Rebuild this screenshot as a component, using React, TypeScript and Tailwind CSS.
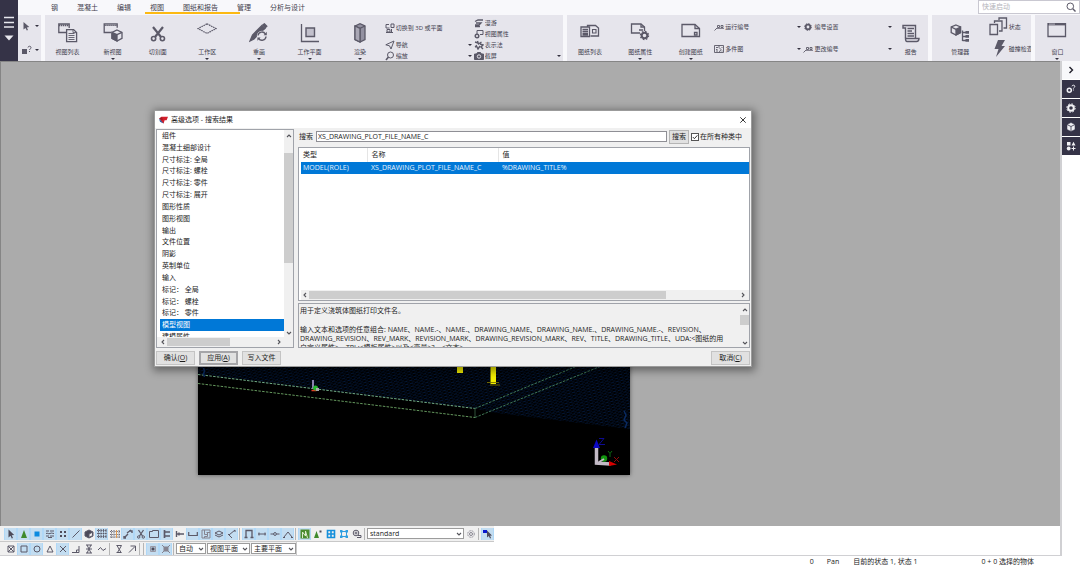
import React from "react";

type Kids = { children?: React.ReactNode };

const FONT = "font-['Open_Sans','Noto_Sans_CJK_SC',sans-serif]";

function Big({ children }: Kids) {
  return (
    <svg viewBox="0 0 20 20" className="h-5 w-5 shrink-0" fill="none" stroke="#5b5968" strokeWidth="1.3">
      {children}
    </svg>
  );
}

function Small({ children, color = "#5b5968" }: Kids & { color?: string }) {
  return (
    <svg viewBox="0 0 10 10" className="h-[10px] w-[10px] shrink-0" fill="none" stroke={color} strokeWidth="1">
      {children}
    </svg>
  );
}

function Caret() {
  return (
    <svg viewBox="0 0 4 2" className="h-[2px] w-1 shrink-0" fill="#33313f">
      <path d="M0 0h4L2 2z" />
    </svg>
  );
}

const D = "#5b5968";

const big = {
  list: (
    <Big>
      <path d="M8 9.5H.8V1h10.4v4" />
      <path d="M1 2.4h10" strokeWidth="1.6" strokeDasharray="1.4 .6" />
      <path d="M8.6 6.6h7l3 3v9h-10z" />
      <path d="M10.5 10.5h6M10.5 12.5h6M10.5 14.5h6M10.5 16.5h6M15 6.6v3h3.6" strokeWidth=".9" />
    </Big>
  ),
  newView: (
    <Big>
      <path d="M8 9.5H1.2V.8h13v4" />
      <path d="M1.4 2.2h12.6" strokeWidth="1.6" strokeDasharray="1.4 .6" />
      <path d="M14 7l5 2.3v6L14 18l-5-2.7v-6z" fill="#e6e5ec" />
      <path d="M9 9.3l5 2.4V18l-5-2.7z" fill={D} />
      <path d="M14 11.7l5-2.4" />
    </Big>
  ),
  cut: (
    <Big>
      <path d="M5 4l8 10M15 4L7 14" strokeWidth="2.2" />
      <circle cx="5.6" cy="15.6" r="2.1" strokeWidth="1.6" />
      <circle cx="14.4" cy="15.6" r="2.1" strokeWidth="1.6" />
    </Big>
  ),
  area: (
    <Big>
      <path d="M10 .8l9 4.8-9 4.8-9-4.8z" strokeDasharray="1.6 .7" strokeWidth="1.2" />
    </Big>
  ),
  redraw: (
    <Big>
      <path d="M1 18l2.500-6L13 2.500l3 3-5 4-6 6.500z" fill={D} />
      <path d="M14 1.800L15.400.8l2.400 2.400-1.400 1.400z" fill={D} />
      <circle cx="13" cy="13" r="5.200" fill="#e6e5ec" stroke="none" />
      <path d="M9 12.500a4 4 0 0 1 7.400-1.500M17 13.500a4 4 0 0 1-7.400 1.800" strokeWidth="1.400" />
      <path d="M17.800 8.800v3.400h-3.200zM8.400 17.800v-3.400h3.200z" fill={D} stroke="none" />
    </Big>
  ),
  plane: (
    <Big>
      <path d="M1.500 1v17.500H19" />
      <path d="M6 5h8.500v8.500H6z" fill="#c2c0cc" strokeWidth="1.400" />
    </Big>
  ),
  render: (
    <Big>
      <path d="M5 3l5-2.300L15 3v13.500l-5 2.500-5-2.500z" fill="#9391a1" />
      <path d="M5 3l5 2.300L15 3M10 5.300V19" />
      <path d="M5 3l5 2.300V19l-5-2.500z" fill="#a9a7b5" />
    </Big>
  ),
  drawings: (
    <Big>
      <path d="M7.500 4V2.500h8l3 2.500v8h-8" />
      <path d="M12.500 6.500h3.500v3.500h-3.500z" strokeWidth="1.100" />
      <path d="M1 4h8.500v9.500H1z" fill="#e6e5ec" />
      <path d="M2.500 6.500h5.500M2.500 8.500h5.500M2.500 10.500h5.500M2.500 12h5.500" />
    </Big>
  ),
  drawProps: (
    <Big>
      <path d="M10 10H1.500V1h9.500l3.500 3v4" />
      <path d="M11 1v3h3.500M9 7h4" />
      <circle cx="14.500" cy="12.500" r="2.800" strokeWidth="2" />
      <circle cx="14.500" cy="12.500" r="4.100" strokeDasharray="1.610 1.610" strokeWidth="1.200" />
    </Big>
  ),
  createDraw: (
    <Big>
      <path d="M1 1.500h13l4.500 4V13.500H1z" />
      <path d="M14 1.500v4h4.500M13.500 9.500h2.500V12h-2.500z" />
    </Big>
  ),
  report: (
    <Big>
      <path d="M4.500 15V5H2V2.500h12.500V15" strokeWidth="1.400" />
      <path d="M6.500 5.500H13M6.500 8h4.500M6.500 10.500H13M6.500 13H13" />
      <path d="M4.500 15.500h13.500c0 2-1 3-2.500 3H6c-1.500 0-1.500-1.500-1.500-3z" strokeWidth="1.400" />
    </Big>
  ),
  manager: (
    <Big>
      <path d="M6 2l4.500 2v5.500L6 12 1.200 9.500V4z" />
      <path d="M6 6.300l4.500-2.300v5.500L6 12z" fill={D} />
      <path d="M1.200 4L6 6.300" />
      <path d="M12.500 7.500v10.500M12.500 9.500H16M12.500 13.500H16M12.500 17.500H16" />
      <path d="M15.500 8h3.500v2.800h-3.500zM15.500 12h3.500v2.800h-3.500zM15.500 16h3.500v2.800h-3.500z" fill={D} stroke="none" />
    </Big>
  ),
  window: (
    <Big>
      <path d="M1 0h17.500V13.500H1z" />
      <path d="M1 1h17.500" strokeWidth="2.800" />
      <path d="M2.500 1.200h5" stroke="#e6e5ec" strokeDasharray="1 1" />
    </Big>
  ),
};

function BigItem({ icon, label, caret }: { icon: React.ReactNode; label: string; caret?: boolean }) {
  return (
    <button className="flex min-w-0 flex-col items-center pt-2">
      {icon}
      <span className="mt-1 whitespace-nowrap text-[6px] leading-[10px]">{label}</span>
      <span className="flex h-1 items-center">{caret && <Caret />}</span>
    </button>
  );
}

function SmallItem({ icon, label, caret }: { icon: React.ReactNode; label: string; caret?: boolean }) {
  return (
    <button className="flex h-[11px] min-w-0 items-center gap-px pr-[2px] text-left">
      {icon}
      <span className="flex-1 overflow-hidden whitespace-nowrap text-[6px] leading-[10px]">{label}</span>
      {caret && <Caret />}
    </button>
  );
}

const num = (
  <Small>
    <path d="M.5 8.500L3 6M3.500 3.500h2v2h-2zM7 3.500h2v2H7z" strokeWidth=".9" />
    <path d="M3 6.500h7" strokeWidth=".7" />
  </Small>
);

function Ribbon() {
  return (
    <div className="grid h-[46px] grid-cols-[517fr_360fr_99fr_45fr] gap-1 overflow-hidden">
      <div className="grid grid-cols-[45fr_45fr_45fr_54fr_49fr_52fr_49fr_89fr_89fr] bg-[#e6e5ec]">
        <BigItem icon={big.list} label="视图列表" />
        <BigItem icon={big.newView} label="新视图" caret />
        <BigItem icon={big.cut} label="切割面" />
        <BigItem icon={big.area} label="工作区" caret />
        <BigItem icon={big.redraw} label="重画" caret />
        <BigItem icon={big.plane} label="工作平面" caret />
        <BigItem icon={big.render} label="渲染" caret />
        <div className="flex flex-col justify-end">
          <SmallItem
            label="切换到 3D 或平面"
            icon={
              <Small>
                <path d="M1 1.500h3M1 1.500v3.500h3.500M6 1h3v3.500H6zM2 6.500h3V9H2zM6.500 6v3M1 9.500h7" />
              </Small>
            }
          />
          <div className="mt-[6px] flex flex-col">
            <SmallItem label="导航" caret icon={<Small><path d="M.8 4.800L9 1 6 9 4.500 5.800z" /></Small>} />
            <SmallItem
              label="缩放"
              caret
              icon={<Small><circle cx="5.500" cy="4" r="3" /><path d="M3.500 6L1 9" strokeWidth="1.600" /></Small>}
            />
          </div>
        </div>
        <div className="flex flex-col justify-end">
          <SmallItem
            label="漫游"
            icon={<Small><path d="M1 3.500l3-1.500h5M2 5h5L5 7H1M1 8.500h5" strokeWidth="1.300" /></Small>}
          />
          <SmallItem
            label="视图属性"
            icon={<Small><path d="M3 5V1.500h6V5.500H6" /><circle cx="3" cy="7" r="1.800" strokeWidth="1.400" /></Small>}
          />
          <SmallItem
            label="表示法"
            icon={<Small><path d="M1 2l3 1M3.500 1l1 3 3-2M6 4l3 1-2 2 2 2M2 5l2 4 2-3M1 7l2-1" strokeWidth="1.400" /></Small>}
          />
          <SmallItem
            label="截屏"
            caret
            icon={
              <Small>
                <path d="M.5 3h2l1-1.500h3L7.500 3h2v5.500h-9z" fill={D} />
                <circle cx="5" cy="5.500" r="1.700" stroke="#e6e5ec" />
              </Small>
            }
          />
        </div>
      </div>
      <div className="grid grid-cols-[46fr_54fr_47fr_89fr_90fr_34fr] bg-[#e6e5ec]">
        <BigItem icon={big.drawings} label="图纸列表" />
        <BigItem icon={big.drawProps} label="图纸属性" caret />
        <BigItem icon={big.createDraw} label="创建图纸" caret />
        <div className="flex flex-col gap-[11px] pt-[6px]">
          <SmallItem icon={num} label="运行编号" caret />
          <SmallItem
            label="多件图"
            caret
            icon={<Small><path d="M.5 1.500h9v7h-9zM5 1.500v2l2 2-2 3M2 3.500h2M2 5.500h1.500M2 7h2M7.500 3.500h1M7.500 7h1" strokeWidth=".9" /></Small>}
          />
        </div>
        <div className="flex flex-col gap-[11px] pt-[6px]">
          <SmallItem
            label="编号设置"
            caret
            icon={
              <Small>
                <circle cx="5" cy="5" r="2.300" strokeWidth="1.800" />
                <circle cx="5" cy="5" r="3.400" strokeDasharray="1.335 1.335" />
              </Small>
            }
          />
          <SmallItem icon={num} label="更改编号" caret />
        </div>
        <BigItem icon={big.report} label="报告" />
      </div>
      <div className="grid grid-cols-[57fr_42fr] overflow-hidden bg-[#e6e5ec]">
        <BigItem icon={big.manager} label="管理器" />
        <div className="flex min-w-0 flex-col gap-[2px] overflow-hidden pt-[2px]">
          <button className="flex items-center text-[6px] leading-[10px]">
            <Big>
              <path d="M1 7.500h7.500v10H1z" />
              <path d="M5.500 6V4H13v10h-3M10 3V1h7.500V11H14.500" />
            </Big>
            <span className="whitespace-nowrap">状态</span>
          </button>
          <button className="flex items-center text-[6px] leading-[10px]">
            <Big>
              <path d="M9 1h7l-3.500 6H16L7 18l2.500-8H5.500z" fill={D} stroke="none" />
            </Big>
            <span className="whitespace-nowrap">碰撞检查</span>
          </button>
        </div>
      </div>
      <div className="grid bg-[#e6e5ec]">
        <BigItem icon={big.window} label="窗口" caret />
      </div>
    </div>
  );
}

function Header() {
  return (
    <header className="flex h-[61px] shrink-0 bg-[#f8f8fb] text-[#3f3d4c]">
      <button aria-label="菜单" className="flex w-[18px] shrink-0 justify-center bg-[#353347]">
        <svg viewBox="0 0 18 61" className="h-[61px] w-[18px]">
          <path d="M4 17.500h10M4 22.500h10M4 27h10" stroke="#e8e8ee" strokeWidth="1.300" />
          <path d="M4.500 35.500h9L9 40.500z" fill="#e8e8ee" />
        </svg>
      </button>
      <div className="flex min-w-0 flex-1 flex-col">
        <div className="flex h-[15px] items-start justify-between">
          <nav className="flex h-[15px] items-center gap-[19px] pl-[33px] text-[7px] leading-[15px]">
            <a href="#steel">钢</a>
            <a href="#concrete">混凝土</a>
            <a href="#edit">编辑</a>
            <div className="relative flex gap-[19px]">
              <a href="#view">视图</a>
              <a href="#drawings">图纸和报告</a>
              <span className="absolute -left-[5px] -right-[22px] bottom-[1px] h-[2px] bg-[#fcb912]" />
            </div>
            <a href="#manage">管理</a>
            <a href="#analysis">分析与设计</a>
          </nav>
          <label className="flex h-[14px] w-[102px] items-center border border-[#c9c8d1] bg-white pl-[3px] pr-[3px]">
            <input
              aria-label="快速启动"
              placeholder="快速启动"
              className="w-full min-w-0 flex-1 text-[7px] leading-[10px] outline-none placeholder:text-[#b4b4bb]"
            />
            <Small><circle cx="4.300" cy="4.300" r="3.300" /><path d="M6.800 6.800l2.700 2.700" strokeWidth="1.400" /></Small>
          </label>
        </div>
        <div className="flex h-[46px] gap-1">
          <div className="flex w-[23px] shrink-0 flex-col justify-between bg-[#e6e5ec] py-[6px] pl-1 pr-[2px]">
            <button aria-label="选择" className="flex items-center justify-between">
              <Small><path d="M1.500 1v7.500l2-1.500 1.300 2.500 1.200-.6-1.200-2.400 2.500-.5z" fill={D} stroke="none" /></Small>
              <Caret />
            </button>
            <button aria-label="查询" className="flex items-center justify-between">
              <Small>
                <path d="M0 4h5v5H0z" fill={D} stroke="none" />
                <path d="M6 2.500C6 .8 9 .8 9 2.500S7.500 3.700 7.500 5M7.500 6v1" />
              </Small>
              <Caret />
            </button>
          </div>
          <div className="min-w-0 flex-1">
            <Ribbon />
          </div>
        </div>
      </div>
    </header>
  );
}

function ModelView() {
  return (
    <svg
      viewBox="198 355 432 120"
      className="absolute left-[198px] top-[294px] h-[120px] w-[432px] bg-black shadow-[0_0_4px_rgba(0,0,0,0.5)]"
    >
      <defs>
        <pattern id="grid" width="5" height="3" patternUnits="userSpaceOnUse" patternTransform="rotate(-14)">
          <path d="M0 .5h3M2.500 2h2.500" stroke="#041c42" strokeWidth=".8" />
        </pattern>
      </defs>
      <path d="M198 355h432v74L490 412l-16-4L198 374z" fill="url(#grid)" />
      <g fill="none" stroke="#6fa868" strokeWidth=".9" strokeDasharray="2.500 1.300">
        <path d="M198 374.500L475 408.500" stroke="#7fbf95" />
        <path d="M198 383.500L475 417.500" />
        <path d="M475 408.500L576 366.500M475 417.500L600 366.500" stroke="#46835e" />
      </g>
      <path d="M475 408v9" stroke="#31533a" />
      <path d="M457 355h6v18h-6zM490.500 355h5.500v29h-5.500z" fill="#f2ee00" />
      <path d="M487 382.500h12M490 385h10" stroke="#7b7200" strokeWidth=".9" />
      <path d="M203.500 368l1 3-1 3 1 3M624 411l2 4-2 5 3 3-2 5" stroke="#0a2a60" strokeWidth="1.500" fill="none" />
      <path d="M313 380v9" stroke="#8a82ad" strokeWidth="2" />
      <path d="M311.500 390.500h5" stroke="#e33b22" strokeWidth="1.500" />
      <circle cx="315.500" cy="388" r="2.500" fill="#26b72c" />
      <path d="M316 388h3v3h-3z" fill="#aaa" />
      <path d="M596.500 446v17l14 1" stroke="#c3bac6" strokeWidth="3.500" fill="none" />
      <path d="M593 448l3.500-8.500L600 448z" fill="#0c08c4" />
      <path d="M599 438.500h5l-5 6h6" stroke="#0d0b91" fill="none" />
      <circle cx="604" cy="458.500" r="3.200" fill="#12970f" />
      <path d="M599 462l5-3" stroke="#c3bac6" strokeWidth="2" />
      <path d="M608 451l2 2.500 2-2.500M610 453.500v3.500" stroke="#0b6d12" fill="none" />
      <path d="M609 461l8 3.500-8 1.500z" fill="#d60000" />
      <path d="M614 457l5 5M619 457l-5 5" stroke="#8f0808" />
    </svg>
  );
}

const CATEGORIES = [
  "组件", "混凝土细部设计", "尺寸标注: 全局", "尺寸标注: 螺栓", "尺寸标注: 零件", "尺寸标注: 展开",
  "图形性质", "图形视图", "输出", "文件位置", "阴影", "英制单位", "输入",
  "标记： 全局", "标记： 螺栓", "标记： 零件", "模型视图", "建模属性",
];

const ROTATE = { up: "", right: "rotate-90", down: "rotate-180", left: "-rotate-90" };

function Arrow({ dir }: { dir: keyof typeof ROTATE }) {
  return (
    <svg viewBox="0 0 8 8" className={`h-2 w-2 shrink-0 ${ROTATE[dir]}`}>
      <path d="M2 5l2-2 2 2" stroke="#55555b" strokeWidth="1.100" fill="none" />
    </svg>
  );
}

function PushButton({ children, focus }: Kids & { focus?: boolean }) {
  return (
    <button
      className={`h-[14px] w-[39px] whitespace-nowrap bg-[#e1e1e1] text-center text-[7px] ${
        focus ? "border-2 border-[#a5a5a8] leading-[10px]" : "border border-[#c4c4c4] leading-[12px]"
      }`}
    >
      {children}
    </button>
  );
}

function Dialog() {
  return (
    <section
      role="dialog"
      aria-label="高级选项 - 搜索结果"
      className="absolute left-[154px] top-[49px] w-[598px] border border-[#9b9b9b] bg-[#f0f0f0] text-[7px] leading-[10px] text-[#1c1c1c] shadow-[1px_2px_8px_2px_rgba(0,0,0,0.4)]"
    >
      <div className="flex h-[17px] items-center gap-[3px] bg-white pl-1 pr-1">
        <svg viewBox="0 0 9 8" className="h-2 w-[9px]">
          <path d="M2.500.8H9L7.600 4.200H5.600L4.600 7.500 1.500 5.500z" fill="#d21f2c" />
          <path d="M0 2.500L2.500.8 4 3.500 2 4.500z" fill="#a81722" />
          <path d="M0 2.800l2 1.700 2.600 3L1 5.800z" fill="#2f64a5" />
        </svg>
        <h1 className="flex-1">高级选项 - 搜索结果</h1>
        <button aria-label="关闭">
          <svg viewBox="0 0 8 8" className="h-2 w-2">
            <path d="M1.300 1.300l5.400 5.400M6.700 1.300L1.300 6.700" stroke="#222" strokeWidth=".9" />
          </svg>
        </button>
      </div>

      <div className="flex h-[220px] gap-1 px-[1px] pt-[1px]">
        <div className="flex w-[138px] shrink-0 flex-col border border-[#a0a3aa] bg-white">
          <div className="flex min-h-0 flex-1">
            <div className="min-w-0 flex-1 overflow-hidden pl-[3px]">
              <ul className="grid h-[213px] auto-rows-fr">
                {CATEGORIES.map((c) => (
                  <li
                    key={c}
                    className={`flex items-center whitespace-nowrap pl-[2px] ${
                      c === "模型视图" ? "bg-[#0078d7] text-white" : ""
                    }`}
                  >
                    {c}
                  </li>
                ))}
              </ul>
            </div>
            <div className="flex w-[9px] flex-col items-center bg-[#f0f0f0]">
              <div className="flex h-[23px] pt-[2px]"><Arrow dir="up" /></div>
              <div className="h-[110px] w-full bg-[#cdcdcd]" />
              <div className="mt-auto"><Arrow dir="down" /></div>
            </div>
          </div>
          <div className="flex h-[10px] items-center bg-[#f0f0f0] pl-[2px] pr-[10px]">
            <Arrow dir="left" />
            <div className="h-2 w-[63px] bg-[#cdcdcd]" />
            <div className="ml-auto"><Arrow dir="right" /></div>
          </div>
        </div>

        <div className="flex min-w-0 flex-1 flex-col">
          <div className="flex h-[15px] items-center gap-[2px] pl-[1px] pr-2">
            <label htmlFor="query" className="pr-[1px]">搜索</label>
            <input
              id="query"
              defaultValue="XS_DRAWING_PLOT_FILE_NAME_C"
              className="h-[11px] min-w-0 flex-1 border border-[#8f8f95] bg-white px-[1px] text-[7px] leading-[9px] outline-none"
            />
            <button className="h-[14px] w-[20px] border border-[#b5b5b5] bg-[#e1e1e1]">搜索</button>
            <label className="flex items-center gap-[1px] whitespace-nowrap">
              <span className="relative flex h-2 w-2">
                <input type="checkbox" defaultChecked className="h-2 w-2 appearance-none border border-[#555] bg-white" />
                <svg viewBox="0 0 8 8" className="pointer-events-none absolute inset-0 h-2 w-2">
                  <path d="M1.800 4l1.600 1.700L6.400 2.300" stroke="#222" strokeWidth=".9" fill="none" />
                </svg>
              </span>
              在所有种类中
            </label>
          </div>

          <div className="mt-[3px] flex h-[154px] flex-col border border-[#a0a3aa] bg-white pl-[2px]">
            <table className="w-full table-fixed border-collapse text-left">
              <colgroup>
                <col className="w-[66px]" />
                <col className="w-[131px]" />
                <col />
              </colgroup>
              <thead>
                <tr className="h-[14px]">
                  <th className="border-r border-[#e5e5e5] p-0 pl-[2px] font-normal">类型</th>
                  <th className="border-r border-[#e5e5e5] p-0 pl-1 font-normal">名称</th>
                  <th className="p-0 pl-1 font-normal">值</th>
                </tr>
              </thead>
              <tbody>
                <tr className="h-3 bg-[#0078d7] text-[#e8f3fc]">
                  <td className="p-0 pl-[2px]">MODEL(ROLE)</td>
                  <td className="p-0 pl-1">XS_DRAWING_PLOT_FILE_NAME_C</td>
                  <td className="p-0 pl-1">%DRAWING_TITLE%</td>
                </tr>
              </tbody>
            </table>
            <div className="mt-auto flex h-[10px] items-center bg-[#f0f0f0] pr-[2px]">
              <Arrow dir="left" />
              <div className="h-2 w-[357px] bg-[#cdcdcd]" />
              <div className="ml-auto"><Arrow dir="right" /></div>
            </div>
          </div>

          <div className="mt-[2px] flex h-[45px] border border-[#a0a3aa]">
            <div className="min-w-0 flex-1 overflow-hidden pl-[1px] pt-[2px] leading-[9px]">
              <p>用于定义浇筑体图纸打印文件名。</p>
              <p className="mt-[10px] whitespace-nowrap">
                输入文本和选项的任意组合: NAME、NAME.-、NAME.、DRAWING_NAME、DRAWING_NAME.、DRAWING_NAME.-、REVISION、
                <br />
                DRAWING_REVISION、REV_MARK、REVISION_MARK、DRAWING_REVISION_MARK、REV、TITLE、DRAWING_TITLE、UDA:&lt;图纸的用
                <br />
                户定义属性&gt;、TPL:&lt;模板属性&gt;以及&lt;变量&gt;?、&lt;文本&gt;
              </p>
            </div>
            <div className="flex w-[9px] shrink-0 flex-col items-center">
              <div className="flex h-[11px] pt-[2px]"><Arrow dir="up" /></div>
              <div className="h-[10px] w-full bg-[#cdcdcd]" />
              <div className="mt-auto"><Arrow dir="down" /></div>
            </div>
          </div>
        </div>
      </div>

      <div className="flex h-[18px] items-center gap-1 px-[1px] pt-px">
        <PushButton>确认(<u>O</u>)</PushButton>
        <PushButton focus>应用(<u>A</u>)</PushButton>
        <PushButton>写入文件</PushButton>
        <div className="flex-1" />
        <PushButton>取消(<u>C</u>)</PushButton>
      </div>
    </section>
  );
}

function Tool({ on, name, children }: Kids & { on?: boolean; name: string }) {
  return (
    <button
      aria-label={name}
      className={`flex h-3 w-[13px] shrink-0 items-center justify-center ${
        on ? "border-x border-[#b0d8f7] bg-[#c3ddf1]" : ""
      }`}
    >
      <Small color="#5b5968">{children}</Small>
    </button>
  );
}

function Sep() {
  return <span className="ml-[1px] mr-[2px] h-3 w-px shrink-0 bg-[#b5b5b5]" />;
}

function Choice({ value, name, width }: { value: string; name: string; width: string }) {
  return (
    <span className={`relative flex h-[11px] shrink-0 ${width}`}>
      <select
        aria-label={name}
        className="w-full appearance-none border border-[#9c9c9c] bg-white pl-[2px] text-[7px] leading-[8px] text-[#1c1c1c] outline-none"
      >
        <option>{value}</option>
      </select>
      <span className="pointer-events-none absolute right-[1px] top-[2px]"><Arrow dir="down" /></span>
    </span>
  );
}

function Toolbars() {
  return (
    <div className="flex h-[29px] shrink-0 flex-col items-start bg-white">
      <div className="flex h-4 items-center border-b border-[#c8c8c8] bg-[#f0f0f0] pl-1">
        <Tool on name="选择"><path d="M2.500.5v8l2-1.700 1.300 2.700 1.200-.6-1.300-2.600 2.500-.3z" fill="#4d4b5a" stroke="none" /></Tool>
        <Tool on name="部件"><path d="M5 1l3 8H2z" fill="#3f8a2c" stroke="none" /></Tool>
        <Tool on name="零件"><path d="M2.500 2.500h5v5h-5z" fill="#0c8be0" stroke="none" /></Tool>
        <Tool on name="表面"><path d="M1 2h3M5 2h4M1 4.500c2-1 2 1 4 0s2 0 4 0M1 7h3M5 7h4M3 8.500h4" /></Tool>
        <Tool on name="点"><path d="M2 2h2v2H2zM6 2h2v2H6zM2 6h2v2H2zM6 6h2v2H6z" fill="#4d4b5a" stroke="none" /></Tool>
        <Tool on name="线"><path d="M1.500 8.500l7-7" /></Tool>
        <Tool name="参考模型"><path d="M5 1l4 2v4L5 9 1 7V3z" fill="#4d4b5a" /><path d="M5 5l3.500-1.800v3.500L5 8.500z" fill="#f0f0f0" /></Tool>
        <Tool on name="轴线"><path d="M1.500 0v9M4 0v9M6.500 0v9M9 0v9M0 1.500h10M0 4.500h10M0 7.500h10" strokeDasharray="1.500 .5" strokeWidth=".9" /></Tool>
        <Tool name="单轴线"><path d="M1.500 1v8M4 1v8M9 1v8M0 2.500h10M0 5.500h10M0 8h10" strokeDasharray="1 .8" strokeWidth=".9" /><path d="M6.500 1v8" stroke="#e09a50" /></Tool>
        <Tool on name="焊缝"><path d="M1 9l4-4M4 4l4-3M6 2h3v2M1 7v2h2" strokeWidth="1.400" /></Tool>
        <Tool on name="切割"><path d="M2.500 1l4 6M7.500 1l-4 6" strokeWidth="1.300" /><circle cx="2.700" cy="8" r="1.200" /><circle cx="7.300" cy="8" r="1.200" /></Tool>
        <Tool on name="视图"><path d="M.5 2.500h3v-1h6v7h-9z" /></Tool>
        <Tool on name="加劲"><path d="M2.500 1v8M3 3h5M3 7h5" strokeWidth="1.700" /></Tool>
        <Tool name="螺栓"><path d="M1.500 2v6M1.500 5H9M4 3.500v3" strokeWidth="1.400" /></Tool>
        <Tool on name="钢筋"><path d="M.7 3v3.500h8.600V3" strokeWidth="1.200" /></Tool>
        <Tool on name="浇筑"><path d="M1 1h8v8H1zM3.500 1v4.500h3M5.500 3.500H9M3.500 9V7.500h3V4" stroke="#85838f" /></Tool>
        <Tool on name="层"><path d="M1 4l4-2 4 2-4 2zM1 6l4 2 4-2" /></Tool>
        <Tool on name="构造线"><path d="M8 1L2 6l3 3M8 1v2M1 5l2 2" /></Tool>
        <Sep />
        <Tool on name="组件"><path d="M2 9V1.500h6V9M.5 8.500h3M6.500 8.500h3" strokeWidth="1.300" /></Tool>
        <Tool on name="组件对象"><path d="M1 5h8M2 3.500v3M8 3.500v3" /></Tool>
        <Tool on name="构件"><path d="M.5 5h3M6.500 5h3" /><circle cx="5" cy="5" r="1.400" /></Tool>
        <Tool on name="构件对象"><path d="M1 8l4-5 4 5M0 8.500h2M8 8.500h2" /></Tool>
        <Sep />
        <Tool on name="任务"><path d="M.5.500h9v9h-9z" fill="#4a8b2c" stroke="none" /><path d="M2.500 9V3l3 4V2l2 7" stroke="#dceccf" /></Tool>
        <Tool name="对象"><path d="M3.500 2L6 9H1z" fill="#3f8a2c" stroke="none" /><path d="M6.500 1.500h2v2h-2z" fill="#4d4b5a" stroke="none" /></Tool>
        <Tool name="网格"><path d="M1.500 1.500h7v7h-7zM1.500 5h7M5 1.500v7" stroke="#158fdb" strokeWidth="1.600" /></Tool>
        <Tool name="捕捉"><path d="M2.500 2.500h5v5h-5z" stroke="#2f9ee0" /><path d="M1 1h2.500v2.500H1zM6.500 1H9v2.500H6.500zM1 6.500h2.500V9H1zM6.500 6.500H9V9H6.500z" fill="#2f9ee0" stroke="none" /></Tool>
        <Tool name="查找"><circle cx="4" cy="4" r="2.800" /><path d="M4 2.500v3M2.500 4h3M6 6.500h3v2H5" /></Tool>
        <Sep />
        <Choice name="选择过滤器" value="standard" width="w-[97px]" />
        <Tool name="过滤器"><circle cx="5" cy="5" r="3.300" stroke="#85838f" strokeDasharray="1 .6" /><circle cx="5" cy="5" r="1.500" stroke="#85838f" /></Tool>
        <Sep />
        <Tool on name="直接修改"><path d="M0 1h4v3H0z" fill="#0818cf" stroke="none" /><path d="M4 1.500v7l1.800-1.400 1.200 2.400 1.100-.5L7 6.700l2-.3z" fill="#4d4b5a" stroke="none" /></Tool>
      </div>
      <div className="flex h-[13px] items-center border-r border-[#c8c8c8] bg-[#f0f0f0] pl-1">
        <Tool name="参考点"><path d="M2 2h6v6H2zM2 2l6 6M8 2L2 8" /></Tool>
        <Tool on name="端点"><path d="M2 2h6v6H2z" /></Tool>
        <Tool on name="中心"><circle cx="5" cy="5" r="3" /></Tool>
        <Tool name="中点"><path d="M5 2l3 6H2z" /></Tool>
        <Tool on name="交点"><path d="M2 2l6 6M8 2L2 8" /></Tool>
        <Tool name="垂足"><path d="M1 8.500h7V2M5.500 8V6H8" /></Tool>
        <Tool name="延长线"><path d="M2 1h6M3 1l4 8M7 1L3 9M2 9h6M2 5h6" /></Tool>
        <Tool name="任意位置"><path d="M1 6l2.500-2.500L6 6.500l3-2" /></Tool>
        <Sep />
        <Tool name="最近点"><path d="M2.500 1.500h5l-4 7h4M3 1.500l4 7h-4.500" /></Tool>
        <Tool name="线和边"><path d="M2 8.500l6-6M3.500 2H8.500v5" /></Tool>
        <Sep />
        <Sep />
        <Tool on name="捕捉参考线"><path d="M2.500 2.500h5v5h-5z" stroke="#9a98a4" /><path d="M3.500 3.500h3v3h-3z" fill="#4d4b5a" stroke="none" /></Tool>
        <Tool on name="捕捉几何"><path d="M3 3h4v4H3z" fill="#85838f" stroke="#85838f" /><path d="M1 1l2 2M9 1L7 3M1 9l2-2M9 9L7 7" stroke="#85838f" /></Tool>
        <Sep />
        <span className="flex gap-px">
          <Choice name="捕捉深度" value="自动" width="w-[30px]" />
          <Choice name="视图平面" value="视图平面" width="w-[43px]" />
          <Choice name="主要平面" value="主要平面" width="w-[45px]" />
        </span>
      </div>
    </div>
  );
}

function SideBar() {
  const tile = "flex h-[18px] w-[18px] items-center justify-center bg-[#353347]";
  return (
    <aside className="flex w-[18px] shrink-0 flex-col gap-px bg-white">
      <button aria-label="收起" className="flex h-[18px] items-center justify-center bg-[#f8f8fb]">
        <Small color="#22202c"><path d="M3.500 2L6.500 5l-3 3" strokeWidth="1.400" /></Small>
      </button>
      <button aria-label="属性帮助" className={tile}>
        <Small color="#f1f1f5"><circle cx="3.300" cy="6.300" r="2" strokeWidth="1.500" /><path d="M6 2.300C6 .8 8.800.8 8.800 2.300S7.400 3.500 7.400 4.500M7.400 5.500v1" /></Small>
      </button>
      <button aria-label="设置" className={tile}>
        <Small color="#f1f1f5"><circle cx="5" cy="5" r="2.800" strokeWidth="2" /><circle cx="5" cy="5" r="4.200" strokeDasharray="1.650 1.650" /></Small>
      </button>
      <button aria-label="参考模型" className={tile}>
        <Small color="#353347"><path d="M5 .5l4 2v5l-4 2-4-2v-5z" fill="#f1f1f5" strokeWidth=".5" /><path d="M1 2.500l4 2 4-2M5 4.500v5" strokeWidth=".8" /></Small>
      </button>
      <button aria-label="应用和组件" className={tile}>
        <Small><path d="M1 1h3.500v3.500H1zM7.500.800l2 3.700h-4zM7 5.500h1v1.500h1.500v1H8v1.500H7V8H5.500V7H7z" fill="#f1f1f5" stroke="none" /><circle cx="2.700" cy="7.500" r="1.900" fill="#f1f1f5" stroke="none" /></Small>
      </button>
    </aside>
  );
}

export default function App() {
  return (
    <div className={`flex min-h-screen flex-col bg-white ${FONT}`}>
      <Header />
      <div className="flex flex-1">
        <div className="flex min-w-0 flex-1 flex-col border-b border-r-2 border-[#d0d0d3]">
          <main className="relative flex-1 border-l border-t border-[#858585] bg-[#ababab]">
            <div className="absolute inset-0 -ml-px -mt-px">
              <ModelView />
              <Dialog />
            </div>
          </main>
          <Toolbars />
        </div>
        <SideBar />
      </div>
      <footer className="flex h-3 shrink-0 items-center justify-end bg-white pr-[46px] text-[7px] leading-[12px] text-[#222]">
        <span>0</span>
        <span className="ml-[13px]">Pan</span>
        <span className="ml-[14px]">目前的状态 1, 状态 1</span>
        <span className="ml-16">0 + 0 选择的物体</span>
      </footer>
    </div>
  );
}
